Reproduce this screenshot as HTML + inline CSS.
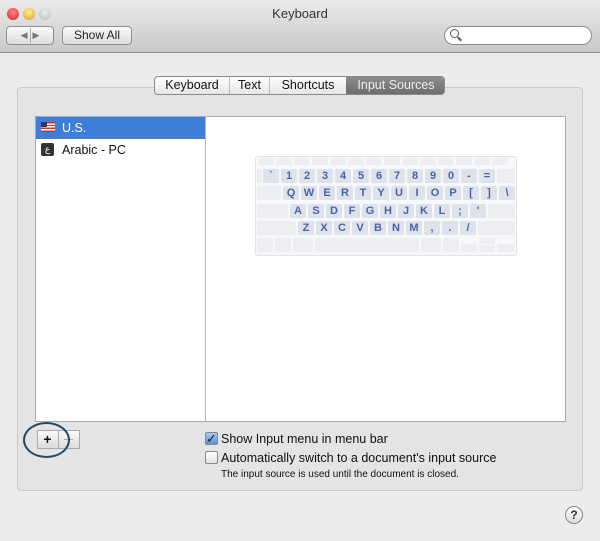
<!DOCTYPE html><html><head><style>
*{margin:0;padding:0;box-sizing:border-box}
body{width:600px;height:541px;background:#ececec;font-family:"Liberation Sans",sans-serif;position:relative;overflow:hidden;font-size:12px;color:#111}
.a{position:absolute}
.tb{left:0;top:0;width:600px;height:53px;background:linear-gradient(#ebebeb,#c8c8c8);border-bottom:1px solid #8a8a8a}
.btn{background:linear-gradient(#fbfbfb,#dcdcdc);border:1px solid #8e8e8e;border-radius:4px;font-size:12px;text-align:center}
.dot{width:12px;height:12px;border-radius:50%;top:8px}
.k{position:absolute;background:#dde2eb;border-radius:2px;color:#4a64a8;font-weight:bold;font-size:11px;text-align:center;line-height:14px;height:14px;width:16px}
.f{background:#eceef2}
</style></head><body>
<div class="a tb"></div>
<div class="a dot" style="left:7px;background:radial-gradient(circle at 50% 35%,#f88,#d42020)"></div>
<div class="a dot" style="left:23px;background:radial-gradient(circle at 50% 35%,#fe9,#e0a010)"></div>
<div class="a dot" style="left:39px;background:radial-gradient(circle at 50% 35%,#eee,#bbb)"></div>
<div class="a" style="left:0;width:600px;top:6px;text-align:center;font-size:13px;color:#333">Keyboard</div>
<div class="a btn" style="left:6px;top:26px;width:48px;height:19px;color:#777;font-size:9px;line-height:17px">◀ &nbsp;▶</div>
<div class="a" style="left:30px;top:28px;width:1px;height:15px;background:#aaa"></div>
<div class="a btn" style="left:62px;top:26px;width:70px;height:19px;line-height:17px;color:#222">Show All</div>
<div class="a" style="left:444px;top:26px;width:148px;height:19px;border:1px solid #8a8a8a;border-radius:10px;background:#fff"></div>
<div class="a" style="left:450px;top:29px;width:9px;height:9px;border:1.5px solid #555;border-radius:50%"></div>
<div class="a" style="left:457px;top:38px;width:5px;height:2px;background:#555;transform:rotate(45deg)"></div>
<div class="a" style="left:17px;top:87px;width:566px;height:404px;border:1px solid #c8c8c8;border-radius:4px;background:#e4e4e4"></div>
<div class="a" style="left:154px;top:76px;width:291px;height:19px;border:1px solid #8a8a8a;border-radius:4px;background:linear-gradient(#fff,#e6e6e6);overflow:hidden;font-size:12.5px;line-height:17px">
<span class="a" style="left:0;width:74px;text-align:center">Keyboard</span>
<span class="a" style="left:74px;width:1px;height:17px;background:#bbb"></span>
<span class="a" style="left:75px;width:39px;text-align:center">Text</span>
<span class="a" style="left:114px;width:1px;height:17px;background:#bbb"></span>
<span class="a" style="left:115px;width:76px;text-align:center">Shortcuts</span>
<span class="a" style="left:191px;top:0;width:100px;height:17px;background:linear-gradient(#8c8c8c,#6e6e6e);color:#eee;text-align:center">Input Sources</span>
</div>
<div class="a" style="left:35px;top:116px;width:531px;height:306px;border:1px solid #a9a9a9;background:#fff"></div>
<div class="a" style="left:205px;top:116px;width:1px;height:306px;background:#b5b5b5"></div>
<div class="a" style="left:36px;top:117px;width:169px;height:22px;background:#3d7fd8"></div>
<div class="a" style="left:41px;top:122px;width:14px;height:10px;background:repeating-linear-gradient(#c33 0 1.4px,#fff 1.4px 2.8px)"></div>
<div class="a" style="left:41px;top:122px;width:6px;height:5px;background:#336"></div>
<div class="a" style="left:62px;top:121px;color:#fff;font-size:12.5px">U.S.</div>
<div class="a" style="left:41px;top:143px;width:13px;height:13px;background:#333;border-radius:2px;color:#fff;font-size:9px;text-align:center;line-height:13px">ع</div>
<div class="a" style="left:62px;top:143px;font-size:12.5px">Arabic - PC</div>
<div class="a" style="left:255px;top:156px;width:262px;height:100px;border:1px solid #e0e2e6;border-radius:3px;background:#f7f8fa"></div>
<div id="kb"></div>
<div class="a btn" style="left:37px;top:430px;width:43px;height:19px;border-radius:0;border-color:#aaa"></div>
<div class="a" style="left:58px;top:430px;width:1px;height:19px;background:#aaa"></div>
<div class="a" style="left:37px;top:430px;width:21px;text-align:center;font-size:14px;font-weight:bold;line-height:19px">+</div>
<div class="a" style="left:64px;top:439px;width:9px;height:1px;background:#aaa"></div>
<div class="a" style="left:23px;top:422px;width:47px;height:36px;border:2px solid #234a66;border-radius:50%"></div>
<div class="a" style="left:205px;top:432px;width:13px;height:13px;border:1px solid #888;border-radius:2px;background:linear-gradient(#a8c8f0,#5a8fd8);color:#123;font-size:13px;line-height:11px;text-align:center">✓</div>
<div class="a" style="left:221px;top:432px;font-size:12.5px">Show Input menu in menu bar</div>
<div class="a" style="left:205px;top:451px;width:13px;height:13px;border:1px solid #888;border-radius:2px;background:linear-gradient(#fff,#e4e4e4)"></div>
<div class="a" style="left:221px;top:451px;font-size:12.5px">Automatically switch to a document's input source</div>
<div class="a" style="left:221px;top:469px;font-size:10px">The input source is used until the document is closed.</div>
<div class="a" style="left:565px;top:506px;width:18px;height:18px;border:1px solid #888;border-radius:50%;background:linear-gradient(#fff,#ddd);text-align:center;font-size:12px;line-height:16px;font-weight:bold;color:#333">?</div>
<script>
var h='';function K(x,y,w,t,f,hh){h+='<div class="k'+(f?' f':'')+'" style="left:'+x+'px;top:'+y+'px;width:'+w+'px'+(hh?';height:'+hh+'px':'')+'">'+(t||'')+'</div>';}
for(var i=0;i<14;i++)K(258+i*18,158,16,'',1,7);
var r="`1234567890-=";for(i=0;i<13;i++)K(263+i*18,169,16,r[i]);K(497,169,17,'',1);K(257,169,5,'',1);
K(257,186,24,'',1);r="QWERTYUIOP[]\\";for(i=0;i<13;i++)K(283+i*18,186,16,r[i]);
K(257,204,31,'',1);r="ASDFGHJKL;'";for(i=0;i<11;i++)K(290+i*18,204,16,r[i]);K(488,204,27,'',1);
K(257,221,39,'',1);r="ZXCVBNM,./";for(i=0;i<10;i++)K(298+i*18,221,16,r[i]);K(478,221,37,'',1);
K(257,238,16,'',1);K(275,238,16,'',1);K(293,238,20,'',1);K(315,238,104,'',1);K(421,238,20,'',1);K(443,238,16,'',1);K(461,244,16,'',1,8);K(479,238,16,'',1,6);K(479,245,16,'',1,7);K(497,244,17,'',1,8);
document.getElementById('kb').outerHTML=h;
</script>
</body></html>
